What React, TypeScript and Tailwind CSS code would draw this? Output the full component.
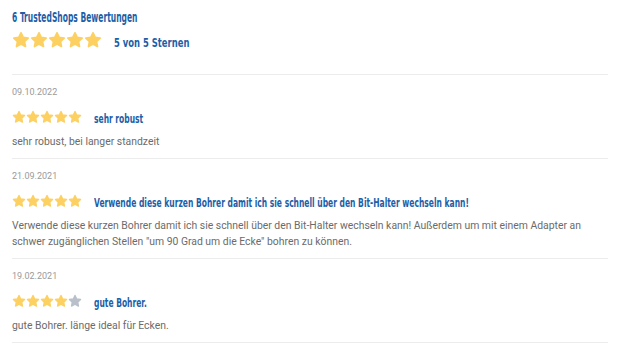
import React from 'react';

interface Review {
  date: string;
  rating: number;
  title: string;
  text: string;
}

const reviews: Review[] = [
  { date: '09.10.2022', rating: 5, title: 'sehr robust', text: 'sehr robust, bei langer standzeit' },
  {
    date: '21.09.2021',
    rating: 5,
    title: 'Verwende diese kurzen Bohrer damit ich sie schnell über den Bit-Halter wechseln kann!',
    text: 'Verwende diese kurzen Bohrer damit ich sie schnell über den Bit-Halter wechseln kann! Außerdem um mit einem Adapter an schwer zugänglichen Stellen "um 90 Grad um die Ecke" bohren zu können.',
  },
  { date: '19.02.2021', rating: 4, title: 'gute Bohrer.', text: 'gute Bohrer. länge ideal für Ecken.' },
];

// condensed headline face, squeezed a bit more to get close to Oswald
const condensed = { fontFamily: '"Liberation Sans Narrow", "DejaVu Sans Condensed", sans-serif' };

const Star: React.FC<{ size: number; filled: boolean }> = ({ size, filled }) => (
  <svg width={size} height={size} viewBox="0 0 24 24">
    <path
      d="M12 2.5l2.9 6.1 6.6.8-4.9 4.6 1.3 6.6L12 17.3l-5.9 3.3 1.3-6.6-4.9-4.6 6.6-.8z"
      fill={filled ? '#fdd062' : '#b9c0c9'}
      stroke={filled ? '#fdd062' : '#b9c0c9'}
      strokeWidth="2.4"
      strokeLinejoin="round"
    />
  </svg>
);

const Stars: React.FC<{ rating: number; size: number }> = ({ rating, size }) => (
  <div className="flex shrink-0">
    {[1, 2, 3, 4, 5].map((i) => (
      <Star key={i} size={size} filled={i <= rating} />
    ))}
  </div>
);

const App: React.FC = () => {
  return (
    <div className="w-[620px] h-[353px] overflow-hidden bg-white px-3 pt-[10px]" style={{ fontFamily: 'Roboto, sans-serif' }}>
      <div className="flex h-[14px] items-center">
        <h2
          className="origin-left scale-x-[0.6] whitespace-nowrap text-[14px] leading-[14px] font-bold text-[#1d5ea7]"
          style={condensed}
        >
          6 TrustedShops Bewertungen
        </h2>
      </div>
      <div className="flex h-[20px] items-center mt-[6px] mb-[24px]">
        <Stars rating={5} size={18} />
        <span
          className="origin-left scale-x-[0.72] whitespace-nowrap ml-[12px] pt-[5px] text-[13px] leading-[14px] font-bold text-[#1d5ea7]"
          style={condensed}
        >
          5 von 5 Sternen
        </span>
      </div>

      {reviews.map((r) => (
        <div key={r.date} className="border-t border-[#ececec] pt-[11px] pb-[8px]">
          <div className="text-[9px] leading-[12px] text-[#9a9a9a]">{r.date}</div>
          <div className="flex h-[14px] items-center mt-[12px]">
            <Stars rating={r.rating} size={14} />
            <span
              className="origin-left scale-x-[0.7] whitespace-nowrap ml-[12px] pt-[3px] text-[12px] leading-[14px] font-bold text-[#1d5ea7]"
              style={condensed}
            >
              {r.title}
            </span>
          </div>
          <p className="mt-[10px] text-[10.4px] leading-[16px] text-[#6b6b6b]">{r.text}</p>
        </div>
      ))}
      <div className="border-t border-[#ececec]" />
    </div>
  );
};

export default App;
